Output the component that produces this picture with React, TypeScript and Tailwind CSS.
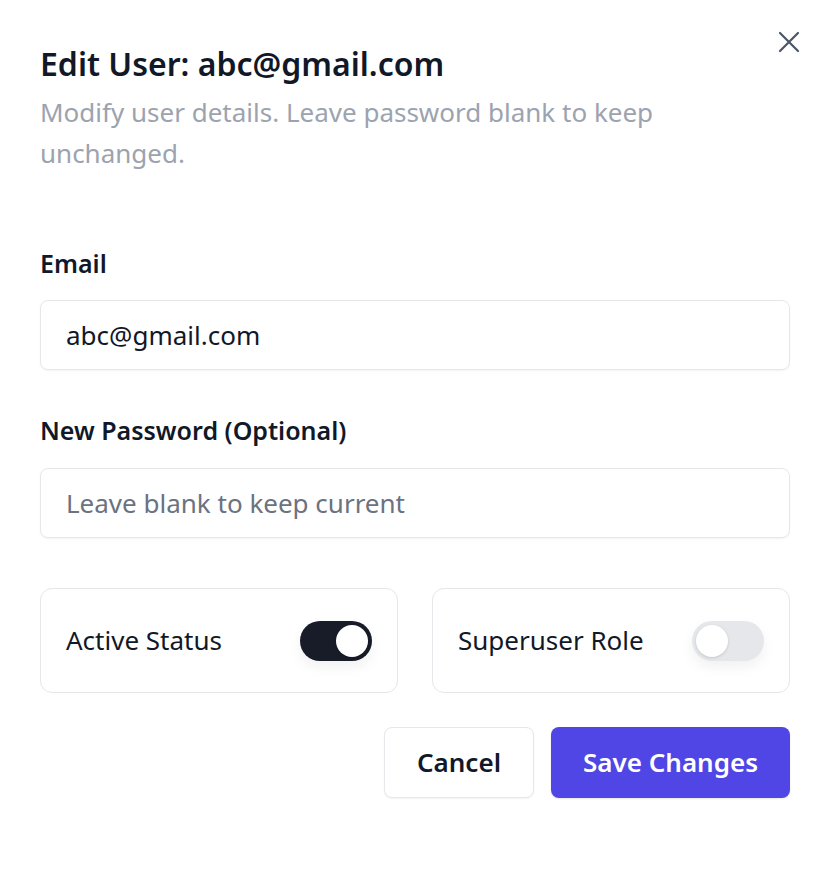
import React, { useState } from "react";

function Toggle({ on, onChange }: { on: boolean; onChange: () => void }) {
  return (
    <button
      type="button"
      onClick={onChange}
      className={
        "flex h-[40px] w-[72px] shrink-0 items-center rounded-full p-[4px] shadow-[0_6px_14px_rgba(0,0,0,0.06)] " +
        (on ? "justify-end bg-[#181b28]" : "justify-start bg-[#e5e7eb]")
      }
    >
      <span className="block h-[32px] w-[32px] rounded-full bg-white shadow-[0_1px_3px_rgba(0,0,0,0.15)]" />
    </button>
  );
}

export default function App() {
  const [active, setActive] = useState(true);
  const [superuser, setSuperuser] = useState(false);

  return (
    <div
      className="relative h-[877px] w-[830px] bg-white px-[40px] pt-[44px] text-[#111827]"
      style={{ fontFamily: '"Noto Sans", "Open Sans", sans-serif' }}
    >
      <button type="button" className="absolute right-[30px] top-[31px] text-[#4b5563]">
        <svg width="22" height="22" viewBox="0 0 22 22" fill="none" stroke="currentColor" strokeWidth="2.2" strokeLinecap="round">
          <path d="M2 2 20 20M20 2 2 20" />
        </svg>
      </button>

      <h2 className="text-[32px] font-semibold leading-[40px]">Edit User: abc@gmail.com</h2>
      <p className="mt-[8px] pr-[110px] text-[26px] leading-[41px] text-[#9ca3af]">
        Modify user details. Leave password blank to keep unchanged.
      </p>

      <label className="mt-[73px] block text-[25px] font-semibold leading-[32px]">Email</label>
      <input
        defaultValue="abc@gmail.com"
        className="mt-[21px] block h-[70px] w-full rounded-[8px] border border-[#e5e7eb] px-[25px] text-[26px] shadow-[0_1px_2px_rgba(0,0,0,0.05)] outline-none"
      />

      <label className="mt-[44px] block text-[25px] font-semibold leading-[32px]">New Password (Optional)</label>
      <input
        type="password"
        placeholder="Leave blank to keep current"
        className="mt-[22px] block h-[70px] w-full rounded-[8px] border border-[#e5e7eb] px-[25px] text-[26px] shadow-[0_1px_2px_rgba(0,0,0,0.05)] outline-none placeholder:text-[#6b7280]"
      />

      <div className="mt-[50px] grid grid-cols-2 gap-[34px]">
        <div className="flex h-[105px] items-center justify-between rounded-[12px] border border-[#e5e7eb] px-[25px]">
          <span className="text-[26px]">Active Status</span>
          <Toggle on={active} onChange={() => setActive(!active)} />
        </div>
        <div className="flex h-[105px] items-center justify-between rounded-[12px] border border-[#e5e7eb] px-[25px]">
          <span className="text-[26px]">Superuser Role</span>
          <Toggle on={superuser} onChange={() => setSuperuser(!superuser)} />
        </div>
      </div>

      <div className="mt-[34px] flex justify-end gap-[17px]">
        <button
          type="button"
          className="h-[71px] w-[150px] rounded-[8px] border border-[#e5e7eb] bg-white text-[26px] font-semibold shadow-[0_1px_2px_rgba(0,0,0,0.05)]"
        >
          Cancel
        </button>
        <button
          type="button"
          className="h-[71px] w-[239px] rounded-[8px] bg-[#4f46e5] text-[26px] font-semibold text-white shadow-[0_1px_2px_rgba(0,0,0,0.1)]"
        >
          Save Changes
        </button>
      </div>
    </div>
  );
}
